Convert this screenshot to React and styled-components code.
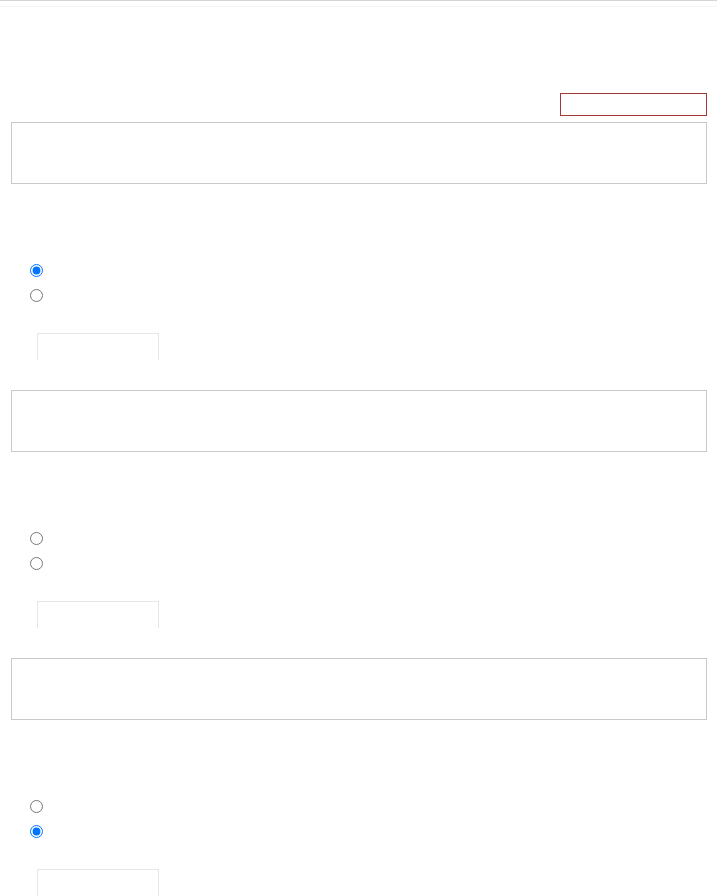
import styled, { createGlobalStyle } from 'styled-components';

const GlobalStyle = createGlobalStyle`
  html, body {
    margin: 0;
    padding: 0;
    background: #ffffff;
    font-family: 'Liberation Sans', Arial, sans-serif;
  }
`;

const questions = [
  { id: 'q1', selected: 0 },
  { id: 'q2', selected: -1 },
  { id: 'q3', selected: 1 },
];

export default function App() {
  return (
    <Page>
      <GlobalStyle />
      <TopRule />
      <Header>
        <ErrorBox />
      </Header>
      {questions.map((q) => (
        <Question key={q.id}>
          <AnswerCard />
          <Options>
            {[0, 1].map((i) => (
              <Radio
                key={i}
                type="radio"
                name={q.id}
                defaultChecked={q.selected === i}
              />
            ))}
          </Options>
          <SmallBox />
        </Question>
      ))}
    </Page>
  );
}

const Page = styled.div`
  width: 717px;
  height: 896px;
  overflow: hidden;
  display: flex;
  flex-direction: column;
`;

const TopRule = styled.div`
  flex: none;
  height: 1px;
  background: #d4d4d4;
  margin-bottom: 5px;
`;

const Header = styled.div`
  display: flex;
  justify-content: flex-end;
  border-top: 1px solid #f6f6f6;
  padding: 86px 10px 0 0;
  margin-bottom: 6px;
`;

const ErrorBox = styled.div`
  width: 145px;
  height: 21px;
  border: 1px solid #a33838;
`;

const Question = styled.div`
  display: flex;
  flex-direction: column;
  padding-left: 11px;
`;

const AnswerCard = styled.div`
  width: 694px;
  height: 60px;
  border: 1px solid #c9c9c9;
`;

const Options = styled.div`
  display: flex;
  flex-direction: column;
  gap: 12px;
  padding: 80px 0 31px 19px;
`;

const Radio = styled.input`
  width: 13px;
  height: 13px;
  margin: 0;
`;

const SmallBox = styled.div`
  box-sizing: border-box;
  width: 122px;
  height: 27px;
  margin: 0 0 30px 26px;
  border: 1px solid #e6e6e6;
  border-bottom: none;
`;
